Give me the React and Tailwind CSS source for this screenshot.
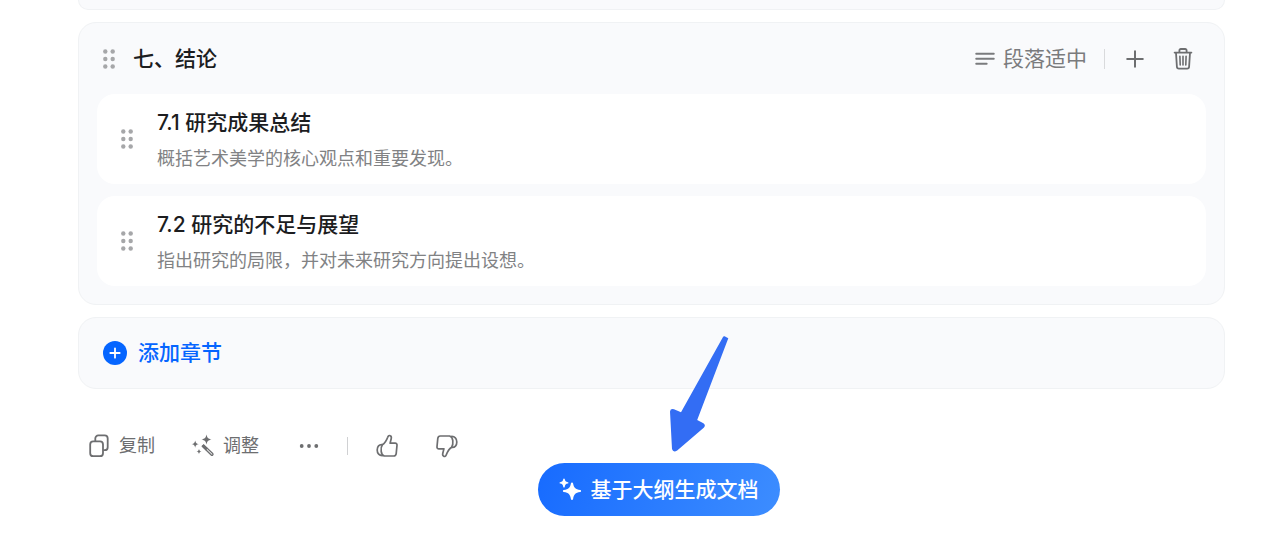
import React from 'react';

const sections = [
  { title: '7.1 研究成果总结', desc: '概括艺术美学的核心观点和重要发现。' },
  { title: '7.2 研究的不足与展望', desc: '指出研究的局限，并对未来研究方向提出设想。' },
];

function DragHandle() {
  return (
    <svg className="w-3 h-5 shrink-0" viewBox="0 0 12 20" fill="#a6a7a9">
      {[2.5, 10, 17.5].map((y) => (
        <g key={y}>
          <circle cx="2.3" cy={y} r="2.2" />
          <circle cx="9.7" cy={y} r="2.2" />
        </g>
      ))}
    </svg>
  );
}

function ParagraphIcon() {
  return (
    <svg className="w-5 h-4" viewBox="0 0 20 16" fill="none" stroke="currentColor" strokeWidth="1.9" strokeLinecap="round">
      <path d="M1.2 2.7h17.600M1.2 7.700h17.600M1.2 12.700h10.500" />
    </svg>
  );
}

function PlusIcon() {
  return (
    <svg className="w-5 h-5" viewBox="0 0 20 20" fill="none" stroke="currentColor" strokeWidth="2" strokeLinecap="round">
      <path d="M10 2.2v15.600M2.2 10h15.600" />
    </svg>
  );
}

function TrashIcon() {
  return (
    <svg className="w-5 h-6" viewBox="0 0 20 24" fill="none" stroke="currentColor" strokeWidth="1.8" strokeLinecap="round" strokeLinejoin="round">
      <path d="M1.6 5.600h16.800M6.400 5.400V3.400a1.400 1.400 0 0 1 1.400-1.400h4.400a1.400 1.400 0 0 1 1.400 1.400v2" />
      <path d="M3 5.800l.9 14a2 2 0 0 0 2 1.900h8.200a2 2 0 0 0 2-1.900l.9-14" />
      <path d="M6.900 9.200l.3 8.800M10 9.200V18M13.100 9.200l-.3 8.800" strokeWidth="1.600" />
    </svg>
  );
}

function CopyIcon() {
  return (
    <svg className="w-5 h-6" viewBox="0 0 20 24" fill="none" stroke="currentColor" strokeWidth="1.8" strokeLinejoin="round">
      <rect x="1.2" y="7.4" width="12.8" height="14.8" rx="3" />
      <path d="M6.3 7.200V4.400a3 3 0 0 1 3-3h6.400a3 3 0 0 1 3 3v8.800a3 3 0 0 1-3 3h-1.400" />
    </svg>
  );
}

function WandIcon() {
  return (
    <svg className="w-6 h-6" viewBox="0 0 24 24" fill="currentColor">
      <path d="M15.500 .4c.9 3.500 1.500 4.100 5 5-3.500.9-4.100 1.500-5 5-.9-3.500-1.500-4.100-5-5 3.500-.9 4.100-1.500 5-5z" />
      <path d="M4.200 6.400c.7 2.600 1.100 3 3.700 3.700-2.600.7-3 1.100-3.700 3.700C3.500 11.200 3.100 10.800.5 10.100c2.600-.7 3-1.100 3.700-3.700z" />
      <path d="M8 15c.5 1.800.8 2.100 2.500 2.500-1.700.4-2 .7-2.500 2.500-.5-1.800-.8-2.100-2.500-2.500 1.700-.4 2-.7 2.500-2.500z" />
      <path d="M11.200 12.300l1.500-1.400 9 8.600a1.050 1.050 0 0 1-1.500 1.500z" fill="none" stroke="currentColor" strokeWidth="1.300" strokeLinejoin="round" />
      <path d="M11.200 12.300l1.500-1.400 3.600 3.500-1.500 1.400z" stroke="currentColor" strokeWidth="1" />
    </svg>
  );
}

function ThumbIcon({ className = '' }) {
  return (
    <svg className={`w-6 h-6 ${className}`} viewBox="0 0 24 24" fill="none" stroke="currentColor" strokeWidth="1.7" strokeLinejoin="round" strokeLinecap="round">
      <path d="M7.400 10.800C9.600 9.400 11.500 6.400 12.700 3.200c.5-1.500 1.600-2 2.600-1.500 1.100.5 1.200 1.700.9 3l-1.100 4.400h5c1.400 0 2 .9 1.900 2.200l-.8 8.300c-.2 1.500-1 2.400-2.500 2.400H9.400c-1.700-.5-2.900-2-3.200-4.700-.3-2.800.1-5.100 1.200-6.500z" />
      <path d="M7.200 10.600c-3.100-.3-5 1.800-5 5.400 0 3.600 2 5.800 5.600 5.500" />
    </svg>
  );
}

function SparkleIcon() {
  return (
    <svg className="w-6 h-6" viewBox="0 0 24 24" fill="currentColor">
      <path d="M13 4.600c.6 0 1 .4 1.100 1 .8 4.200 2.200 5.600 7.100 6.500 1.200.2 1.200 1.800 0 2-4.900.9-6.300 2.300-7.100 6.900-.2 1.300-2 1.300-2.200 0-.8-4.600-2.200-6-7.100-6.900-1.200-.2-1.200-1.800 0-2 4.900-.9 6.300-2.300 7.100-6.500.1-.6.500-1 1.100-1z" />
      <path d="M5 .4c.4 0 .6.200.7.600.4 2.200 1 2.800 3.200 3.200.8.100.8 1.200 0 1.400-2.200.4-2.800 1-3.200 3.400-.1.800-1.300.8-1.400 0-.4-2.400-1-3-3.200-3.400-.8-.2-.8-1.300 0-1.400 2.200-.4 2.800-1 3.200-3.200.1-.4.300-.6.700-.6z" />
    </svg>
  );
}

function Arrow() {
  return (
    <svg
      className="absolute bottom-full left-[130px] mb-[10px] w-[62px] h-[118px] pointer-events-none"
      viewBox="0 0 62 118"
      fill="#336df4"
    >
      <path d="M56.600 1.300L60.300 3.200L29.200 85L35.400 88.200Q38 90 36 92.400L9.200 115.400Q5.200 118 4 114L2 76.500Q2.500 73.200 6 74.300L13 77.200L55 2Q55.500 1 56.600 1.300z" />
    </svg>
  );
}

function SectionRow({ title, desc }) {
  return (
    <div className="flex items-center gap-6 h-[90px] pl-6 bg-white rounded-[18px]">
      <DragHandle />
      <div>
        <h3 className="text-[21px] leading-8 font-medium">{title}</h3>
        <p className="mt-2 text-[18px] leading-6 text-[#818284]">{desc}</p>
      </div>
    </div>
  );
}

function App() {
  return (
    <main className="pl-[78px] pr-[55px] bg-white text-[#1c1d1f] font-[Inter,'Noto_Sans_CJK_SC',sans-serif]">
      <div className="flex flex-col gap-3">
        <div className="h-[10px] rounded-b-[18px] border border-t-0 border-[#f0f2f4] bg-[#f9fafc]" />

        <section className="px-[18px] pb-[18px] rounded-[18px] border border-[#f0f2f4] bg-[#f9fafc]">
          <header className="flex items-center h-[71px] pl-[6px] pr-[13px]">
            <DragHandle />
            <h2 className="ml-[18px] text-[21px] leading-8 font-medium">七、结论</h2>
            <div className="flex items-center ml-auto text-[#7a7b7d]">
              <button className="flex items-center gap-2 text-[21px] leading-8">
                <ParagraphIcon />
                段落适中
              </button>
              <span className="w-px h-5 ml-[17px] mr-5 bg-[#d9dadc]" />
              <button aria-label="添加" className="text-[#6d6e70]">
                <PlusIcon />
              </button>
              <button aria-label="删除" className="ml-7 text-[#6d6e70]">
                <TrashIcon />
              </button>
            </div>
          </header>
          <div className="flex flex-col gap-3">
            {sections.map((s) => (
              <SectionRow key={s.title} title={s.title} desc={s.desc} />
            ))}
          </div>
        </section>

        <button className="flex items-center gap-[11px] h-[72px] pl-6 rounded-[18px] border border-[#f0f2f4] bg-[#f9fafc] text-[#0565ff] text-[21px] leading-8 font-medium">
          <svg className="w-6 h-6" viewBox="0 0 24 24">
            <circle cx="12" cy="12" r="12" fill="#0565ff" />
            <path d="M12 7.300v9.400M7.300 12h9.400" stroke="#fff" strokeWidth="1.800" strokeLinecap="round" />
          </svg>
          添加章节
        </button>
      </div>

      <div className="flex items-center h-[34px] mt-10 pl-[11px] text-[18px] leading-6 text-[#6d6e70]">
        <button className="flex items-center gap-[10px]">
          <CopyIcon />
          复制
        </button>
        <button className="flex items-center gap-2 ml-9">
          <WandIcon />
          调整
        </button>
        <button aria-label="更多" className="ml-10">
          <svg className="w-5 h-5" viewBox="0 0 20 20" fill="currentColor">
            <circle cx="2.700" cy="10" r="1.900" />
            <circle cx="10" cy="10" r="1.900" />
            <circle cx="17.300" cy="10" r="1.900" />
          </svg>
        </button>
        <span className="w-px h-[18px] ml-7 mr-[27px] bg-[#d0d1d3]" />
        <button aria-label="赞">
          <ThumbIcon />
        </button>
        <button aria-label="踩" className="ml-9">
          <ThumbIcon className="rotate-180" />
        </button>
      </div>

      <div className="flex justify-center pl-[14px]">
        <div className="relative">
          <Arrow />
          <button className="flex items-center gap-2 h-[53px] px-[21px] rounded-full bg-linear-[110deg] from-[#176bff] to-[#3d8dff] text-white text-[21px] leading-8 font-medium">
            <SparkleIcon />
            基于大纲生成文档
          </button>
        </div>
      </div>
    </main>
  );
}

export default App;
